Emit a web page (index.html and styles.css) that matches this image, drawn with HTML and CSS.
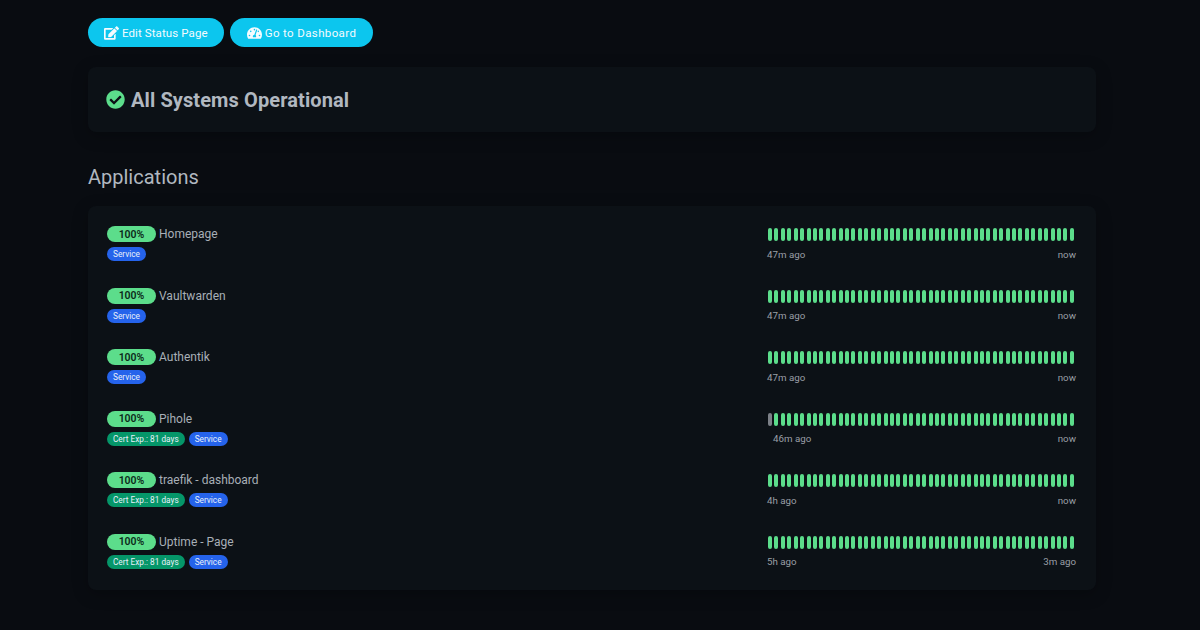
FILE: index.html
```html
<!DOCTYPE html>
<html lang="en">
<head>
<meta charset="utf-8">
<title>Status Page</title>
<link rel="stylesheet" href="styles.css">
</head>
<body>
<main class="container">
  <div class="actions">
    <a class="btn"><svg class="btn-icon" viewBox="0 0 576 512"><path d="M402.6 83.2l90.2 90.2c3.8 3.8 3.8 10 0 13.8L274.4 405.6l-92.8 10.3c-12.4 1.4-22.9-9.1-21.5-21.5l10.3-92.8L388.8 83.2c3.8-3.8 10-3.8 13.8 0zm162-22.9l-48.8-48.8c-15.2-15.2-39.9-15.2-55.2 0l-35.4 35.4c-3.8 3.8-3.8 10 0 13.8l90.2 90.2c3.8 3.8 10 3.8 13.8 0l35.4-35.4c15.2-15.3 15.2-40 0-55.2zM384 346.2V448H64V128h229.8c3.2 0 6.2-1.3 8.5-3.5l40-40c7.6-7.6 2.2-20.5-8.5-20.5H48C21.5 64 0 85.5 0 112v352c0 26.5 21.5 48 48 48h352c26.5 0 48-21.5 48-48V306.2c0-10.7-12.9-16-20.5-8.5l-40 40c-2.2 2.3-3.5 5.3-3.5 8.5z"/></svg>Edit Status Page</a>
    <a class="btn btn-wide"><svg class="btn-icon" viewBox="0 0 576 512"><path d="M288 32C128.94 32 0 160.94 0 320c0 52.8 14.25 102.26 39.06 144.8 5.61 9.62 16.3 15.2 27.44 15.2h443c11.14 0 21.83-5.58 27.44-15.2C561.75 422.26 576 372.8 576 320c0-159.06-128.94-288-288-288zm0 64c14.71 0 26.58 10.13 30.32 23.65-1.11 2.26-2.64 4.23-3.45 6.67l-9.22 27.67c-5.13 3.49-10.97 6.01-17.64 6.01-17.67 0-32-14.33-32-32S270.33 96 288 96zM96 384c-17.67 0-32-14.33-32-32s14.33-32 32-32 32 14.33 32 32-14.33 32-32 32zm48-160c-17.67 0-32-14.33-32-32s14.33-32 32-32 32 14.33 32 32-14.33 32-32 32zm246.77-72.41l-61.33 184C343.13 347.33 352 364.54 352 384c0 11.72-3.38 22.55-8.88 32H232.88c-5.5-9.45-8.88-20.28-8.88-32 0-33.94 26.5-61.43 59.9-63.59l61.34-184.01c4.17-12.56 17.73-19.45 30.36-15.17 12.57 4.19 19.35 17.79 15.17 30.36zm14.66 57.2l15.52-46.55c3.47-1.29 7.13-2.23 11.05-2.23 17.67 0 32 14.33 32 32s-14.33 32-32 32c-11.38-.01-20.89-6.28-26.57-15.22zM480 384c-17.67 0-32-14.33-32-32s14.33-32 32-32 32 14.33 32 32-14.33 32-32 32z"/></svg>Go to Dashboard</a>
  </div>

  <section class="card overall">
    <svg class="ok-icon" viewBox="0 0 512 512"><path d="M504 256c0 136.967-111.033 248-248 248S8 392.967 8 256 119.033 8 256 8s248 111.033 248 248zM227.314 387.314l184-184c6.248-6.248 6.248-16.379 0-22.627l-22.627-22.627c-6.248-6.249-16.379-6.249-22.628 0L216 308.118l-70.059-70.059c-6.248-6.248-16.379-6.248-22.628 0l-22.627 22.627c-6.248 6.248-6.248 16.379 0 22.627l104 104c6.249 6.249 16.379 6.249 22.628.001z"/></svg>
    <span>All Systems Operational</span>
  </section>

  <h2 class="group-title">Applications</h2>

  <section class="card monitors">
    <article class="monitor">
      <div class="info">
        <div class="title-line"><span class="pill">100%</span><span class="name">Homepage</span></div>
        <div class="tags"><span class="tag tag-blue">Service</span></div>
      </div>
      <div class="history">
        <div class="beats"><i></i><i></i><i></i><i></i><i></i><i></i><i></i><i></i><i></i><i></i><i></i><i></i><i></i><i></i><i></i><i></i><i></i><i></i><i></i><i></i><i></i><i></i><i></i><i></i><i></i><i></i><i></i><i></i><i></i><i></i><i></i><i></i><i></i><i></i><i></i><i></i><i></i><i></i><i></i><i></i><i></i><i></i><i></i><i></i><i></i><i></i><i></i><i></i></div>
        <div class="times"><span>47m ago</span><span>now</span></div>
      </div>
    </article>
    <article class="monitor">
      <div class="info">
        <div class="title-line"><span class="pill">100%</span><span class="name">Vaultwarden</span></div>
        <div class="tags"><span class="tag tag-blue">Service</span></div>
      </div>
      <div class="history">
        <div class="beats"><i></i><i></i><i></i><i></i><i></i><i></i><i></i><i></i><i></i><i></i><i></i><i></i><i></i><i></i><i></i><i></i><i></i><i></i><i></i><i></i><i></i><i></i><i></i><i></i><i></i><i></i><i></i><i></i><i></i><i></i><i></i><i></i><i></i><i></i><i></i><i></i><i></i><i></i><i></i><i></i><i></i><i></i><i></i><i></i><i></i><i></i><i></i><i></i></div>
        <div class="times"><span>47m ago</span><span>now</span></div>
      </div>
    </article>
    <article class="monitor">
      <div class="info">
        <div class="title-line"><span class="pill">100%</span><span class="name">Authentik</span></div>
        <div class="tags"><span class="tag tag-blue">Service</span></div>
      </div>
      <div class="history">
        <div class="beats"><i></i><i></i><i></i><i></i><i></i><i></i><i></i><i></i><i></i><i></i><i></i><i></i><i></i><i></i><i></i><i></i><i></i><i></i><i></i><i></i><i></i><i></i><i></i><i></i><i></i><i></i><i></i><i></i><i></i><i></i><i></i><i></i><i></i><i></i><i></i><i></i><i></i><i></i><i></i><i></i><i></i><i></i><i></i><i></i><i></i><i></i><i></i><i></i></div>
        <div class="times"><span>47m ago</span><span>now</span></div>
      </div>
    </article>
    <article class="monitor">
      <div class="info">
        <div class="title-line"><span class="pill">100%</span><span class="name">Pihole</span></div>
        <div class="tags"><span class="tag tag-green">Cert Exp.: 81 days</span><span class="tag tag-blue">Service</span></div>
      </div>
      <div class="history">
        <div class="beats"><i class="empty"></i><i></i><i></i><i></i><i></i><i></i><i></i><i></i><i></i><i></i><i></i><i></i><i></i><i></i><i></i><i></i><i></i><i></i><i></i><i></i><i></i><i></i><i></i><i></i><i></i><i></i><i></i><i></i><i></i><i></i><i></i><i></i><i></i><i></i><i></i><i></i><i></i><i></i><i></i><i></i><i></i><i></i><i></i><i></i><i></i><i></i><i></i><i></i></div>
        <div class="times times-inset"><span>46m ago</span><span>now</span></div>
      </div>
    </article>
    <article class="monitor">
      <div class="info">
        <div class="title-line"><span class="pill">100%</span><span class="name">traefik - dashboard</span></div>
        <div class="tags"><span class="tag tag-green">Cert Exp.: 81 days</span><span class="tag tag-blue">Service</span></div>
      </div>
      <div class="history">
        <div class="beats"><i></i><i></i><i></i><i></i><i></i><i></i><i></i><i></i><i></i><i></i><i></i><i></i><i></i><i></i><i></i><i></i><i></i><i></i><i></i><i></i><i></i><i></i><i></i><i></i><i></i><i></i><i></i><i></i><i></i><i></i><i></i><i></i><i></i><i></i><i></i><i></i><i></i><i></i><i></i><i></i><i></i><i></i><i></i><i></i><i></i><i></i><i></i><i></i></div>
        <div class="times"><span>4h ago</span><span>now</span></div>
      </div>
    </article>
    <article class="monitor">
      <div class="info">
        <div class="title-line"><span class="pill">100%</span><span class="name">Uptime - Page</span></div>
        <div class="tags"><span class="tag tag-green">Cert Exp.: 81 days</span><span class="tag tag-blue">Service</span></div>
      </div>
      <div class="history">
        <div class="beats"><i></i><i></i><i></i><i></i><i></i><i></i><i></i><i></i><i></i><i></i><i></i><i></i><i></i><i></i><i></i><i></i><i></i><i></i><i></i><i></i><i></i><i></i><i></i><i></i><i></i><i></i><i></i><i></i><i></i><i></i><i></i><i></i><i></i><i></i><i></i><i></i><i></i><i></i><i></i><i></i><i></i><i></i><i></i><i></i><i></i><i></i><i></i><i></i></div>
        <div class="times"><span>5h ago</span><span>3m ago</span></div>
      </div>
    </article>
  </section>
</main>
</body>
</html>
```
FILE: styles.css
```css
* { box-sizing: border-box; }

html, body { height: 100%; }

body {
  margin: 0;
  overflow: hidden;
  background: #090c11;
  color: #b1b8c0;
  font-family: Roboto, "Noto Sans", "Liberation Sans", sans-serif;
}

.container {
  width: 1008px;
  margin-left: 88px;
  padding-top: 18px;
}

.actions {
  display: flex;
  gap: 6px;
}

.btn {
  display: flex;
  align-items: center;
  height: 29px;
  padding: 0 16px;
  border-radius: 15px;
  background: #0cc6ee;
  color: #f4fbfe;
  font-size: 11.5px;
  letter-spacing: 0.1px;
}

.btn-wide {
  padding: 0 17px;
  letter-spacing: 0.38px;
}

.btn-icon {
  width: 15px;
  height: 14px;
  margin-right: 3px;
  fill: #f4fbfe;
}

.card {
  border-radius: 8px;
  background: #0c1116;
  box-shadow: 0 4px 16px rgba(0, 0, 0, 0.25);
}

.overall {
  display: flex;
  align-items: center;
  gap: 6px;
  height: 65px;
  margin-top: 20px;
  padding-left: 18px;
  font-size: 20px;
  font-weight: 700;
  letter-spacing: 0.1px;
  color: #b1b8c0;
}

.ok-icon {
  width: 19px;
  height: 19px;
  fill: #5cdd8b;
}

.group-title {
  margin: 32px 0 15px;
  font-size: 20px;
  font-weight: 400;
  line-height: 27px;
}

.monitors {
  display: flex;
  flex-direction: column;
  height: 384px;
  padding: 19px 19px 0;
}

.monitor {
  display: flex;
  justify-content: space-between;
  height: 61.6px;
  flex: none;
}

.title-line {
  display: flex;
  align-items: center;
  height: 16px;
  margin-top: 1px;
  gap: 3px;
}

.pill {
  display: flex;
  align-items: center;
  justify-content: center;
  width: 49px;
  height: 16px;
  border-radius: 8px;
  background: #5cdd8b;
  color: #0c2a1a;
  font-size: 10.5px;
  font-weight: 600;
}

.name {
  font-size: 12px;
  color: #a8afb7;
}

.tags {
  display: flex;
  gap: 4px;
  margin-top: 5px;
}

.tag {
  display: flex;
  align-items: center;
  height: 14px;
  padding: 0 6px;
  border-radius: 7px;
  color: #e8f0fa;
  font-size: 8.25px;
}

.tag-blue { background: #2563eb; }
.tag-green { background: #059669; }

.history {
  width: 312px;
  margin-right: 1px;
}

.beats {
  display: flex;
  justify-content: space-between;
  height: 16px;
  padding: 3px 2px 0 4px;
}

.beats i {
  display: block;
  width: 4px;
  height: 13px;
  border-radius: 2px;
  background: #5cdd8b;
}

.beats i.empty { background: #7c8087; }

.times {
  display: flex;
  justify-content: space-between;
  margin-top: 6.5px;
  padding: 0 0 0 3px;
  font-size: 9.75px;
  line-height: 13px;
  color: #9a9fa6;
}

.times-inset { padding-left: 9px; }
```
